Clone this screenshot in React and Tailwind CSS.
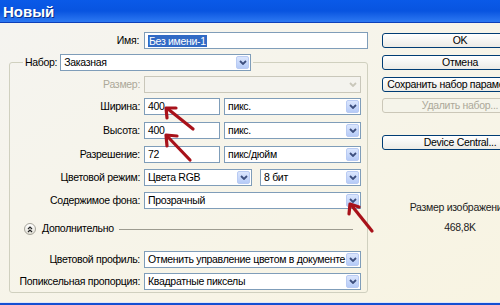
import React from "react";

const Chevron = ({ color }) => (
    <svg width="8" height="5" viewBox="0 0 8 5">
        <path d="M1 1 L4 4 L7 1" fill="none" stroke={color} strokeWidth="1.8" />
    </svg>
);

const Select = ({ text, className = "", disabled }) => (
    <div
        className={
            "flex h-[17px] min-w-0 items-center border " +
            (disabled ? "border-[#c9c7ba] bg-[#f4f3ee] " : "border-[#7f9db9] bg-white ") +
            className
        }
    >
        <span className="min-w-0 flex-1 overflow-hidden whitespace-nowrap pl-[3px] leading-[15px]">{text}</span>
        {disabled ? (
            <div className="mr-[1px] flex h-[13px] w-[13px] shrink-0 items-center justify-center rounded-[2px] bg-[#f4f3ee]">
                <Chevron color="#c9c7ba" />
            </div>
        ) : (
            <div className="mr-[1px] flex h-[13px] w-[13px] shrink-0 items-center justify-center rounded-[2px] border border-[#b9cbf3] bg-gradient-to-b from-[#dbe6fd] to-[#b6cbf7]">
                <Chevron color="#3d4f7e" />
            </div>
        )}
    </div>
);

const Input = ({ children, className = "" }) => (
    <div className={"flex h-[17px] shrink-0 items-center border border-[#7f9db9] bg-white pl-[3px] " + className}>
        {children}
    </div>
);

const Row = ({ label, mt, muted, children }) => (
    <div className={"flex h-[17px] items-center " + mt}>
        <div className={"w-[134px] shrink-0 whitespace-nowrap pr-[4px] text-right " + (muted ? "text-[#aca899]" : "text-black")}>
            {label}
        </div>
        <div className="flex min-w-0 flex-1 items-center">{children}</div>
    </div>
);

const Button = ({ children, mt, disabled }) => (
    <div
        className={
            "flex h-[15px] w-full items-center justify-center overflow-hidden whitespace-nowrap rounded-[3px] border leading-[13px] " +
            (disabled
                ? "border-[#cbc7b8] bg-[#f5f4ea] text-[#aca899] "
                : "border-[#003c74] bg-gradient-to-b from-white to-[#ecebe6] text-black ") +
            mt
        }
    >
        {children}
    </div>
);

export default function App() {
    return (
        <div className="relative h-[305px] w-[500px] overflow-hidden font-['Liberation_Sans',Arial,sans-serif] text-[10.5px] tracking-[-0.3px] text-black">
            {/* title bar */}
            <div className="flex h-[23px] items-center border-b border-[#0d3fb8] bg-gradient-to-b from-[#0a5ae8] via-[#0854e0] to-[#2c78f2] pl-[3px]">
                <span className="text-[15px] font-bold leading-none tracking-normal text-white [text-shadow:1px_1px_0_#0a2f8a]">Новый</span>
            </div>

            <div className="flex h-[279px] bg-gradient-to-br from-[#f5f4f0] to-[#f8f4e2]">
                {/* left column */}
                <div className="w-[368px] shrink-0">
                    <div className="mt-[9px] flex h-[17px] items-center">
                        <div className="w-[144px] shrink-0 pr-[5px] text-right">Имя:</div>
                        <Input className="w-[224px]">
                            <span className="bg-[#316ac5] px-[1px] leading-[12px] text-white">Без имени-1</span>
                        </Input>
                    </div>

                    <fieldset className="ml-[9px] mt-[5px] w-[359px] min-w-0 rounded-[3px] border border-[#d0d0bf] pb-[2px] pr-[6px]">
                        <legend className="ml-[13px] px-[2px]">
                            <div className="flex h-[17px] items-center">
                                <span className="pr-[3px]">Набор:</span>
                                <Select text="Заказная" className="w-[191px]" />
                            </div>
                        </legend>

                        <Row label="Размер:" mt="mt-[5px]" muted>
                            <Select text="" disabled className="flex-1" />
                        </Row>
                        <Row label="Ширина:" mt="mt-[5px]">
                            <Input className="w-[76px]">400</Input>
                            <Select text="пикс." className="ml-[4px] flex-1" />
                        </Row>
                        <Row label="Высота:" mt="mt-[7px]">
                            <Input className="w-[76px]">400</Input>
                            <Select text="пикс." className="ml-[4px] flex-1" />
                        </Row>
                        <Row label="Разрешение:" mt="mt-[7px]">
                            <Input className="w-[76px]">72</Input>
                            <Select text="пикс/дюйм" className="ml-[4px] flex-1" />
                        </Row>
                        <Row label="Цветовой режим:" mt="mt-[6px]">
                            <Select text="Цвета RGB" className="w-[108px] shrink-0" />
                            <Select text="8 бит" className="ml-[8px] flex-1" />
                        </Row>
                        <Row label="Содержимое фона:" mt="mt-[6px]">
                            <Select text="Прозрачный" className="flex-1" />
                        </Row>

                        {/* advanced divider */}
                        <div className="mt-[13px] flex h-[14px] items-center pl-[14px] pr-[8px]">
                            <div className="flex h-[12px] w-[12px] items-center justify-center rounded-full border border-[#a7a59b] bg-gradient-to-b from-white to-[#e2e0d6]">
                                <svg width="6" height="7" viewBox="0 0 6 7">
                                    <path d="M1 3 L3 1 L5 3 M1 6 L3 4 L5 6" fill="none" stroke="#222" strokeWidth="1.2" />
                                </svg>
                            </div>
                            <span className="ml-[6px]">Дополнительно</span>
                            <div className="ml-[5px] h-px flex-1 bg-[#9d9b90]" />
                        </div>

                        <Row label="Цветовой профиль:" mt="mt-[15px]">
                            <Select text="Отменить управление цветом в документе" className="flex-1" />
                        </Row>
                        <Row label="Попиксельная пропорция:" mt="mt-[5px]">
                            <Select text="Квадратные пикселы" className="flex-1" />
                        </Row>
                    </fieldset>
                </div>

                {/* right column */}
                <div className="ml-[14px] w-[156px] shrink-0 pt-[10px] text-center">
                    <Button mt="">OK</Button>
                    <Button mt="mt-[7px]">Отмена</Button>
                    <Button mt="mt-[7px]">Сохранить набор параметров...</Button>
                    <Button mt="mt-[6px]" disabled>Удалить набор...</Button>
                    <Button mt="mt-[22px]">Device Central...</Button>
                    <div className="mt-[51px] whitespace-nowrap leading-[13px] text-[#222]">Размер изображения:</div>
                    <div className="mt-[7px] leading-[13px] text-[#222]">468,8K</div>
                </div>
            </div>

            <div className="h-[3px] border-t border-[#dfe7f8] bg-[#1450d2]" />

            {/* red annotation arrows */}
            <svg className="pointer-events-none absolute left-0 top-0" width="500" height="305">
                <g stroke="#a8121a" strokeWidth="3.2" strokeLinecap="round" strokeLinejoin="round" fill="none">
                    <path d="M193 129 L168 109" />
                    <path d="M167 118 L166 108 L176 108" />
                    <path d="M190 160 L168 137" />
                    <path d="M167 146 L166 135 L177 136" />
                    <path d="M372 231 L352 206" />
                    <path d="M349 214 L350 204 L359 207" />
                </g>
            </svg>
        </div>
    );
}
